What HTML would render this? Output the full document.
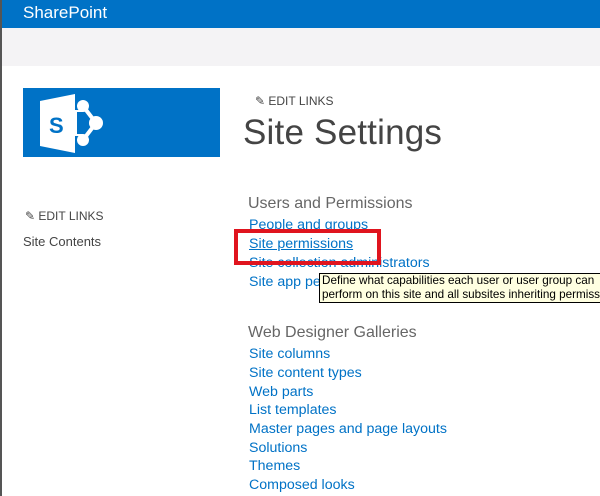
<!DOCTYPE html>
<html><head><style>
body{margin:0;width:600px;height:496px;overflow:hidden;background:#fff;font-family:"Segoe UI","Liberation Sans",sans-serif;position:relative}
.top{position:absolute;left:0;top:0;width:600px;height:28px;background:#0072c6}
.top span{position:absolute;left:23px;top:3px;color:#fff;font-size:17px}
.band{position:absolute;left:0;top:28px;width:600px;height:38px;background:#f4f3f5}
.lb{position:absolute;left:0;top:0;width:2px;height:496px;background:#555}
.logo{position:absolute;left:23px;top:88px;width:197px;height:69px;background:#0072c6}
.t{position:absolute;white-space:nowrap}
.link{position:absolute;left:249px;font-size:14.2px;color:#0072c6;white-space:nowrap}
</style></head><body>
<div class="top"><span>SharePoint</span></div>
<div class="band"></div>
<div class="lb"></div>
<div class="logo">
<svg width="197" height="69" viewBox="0 0 197 69">
<polygon points="17,13 52,6 52,65 17,58" fill="#fff"/>
<text x="26" y="45" font-family="Liberation Sans" font-weight="bold" font-size="22" fill="#0072c6">S</text>
<circle cx="60" cy="18" r="6" fill="#fff"/><circle cx="60" cy="52" r="6" fill="#fff"/><circle cx="73" cy="35" r="7" fill="#fff"/>
<path d="M60,18 L73,35 L60,52" stroke="#fff" stroke-width="4" fill="none"/>
<rect x="52" y="22" width="8" height="26" fill="#fff"/>
<rect x="54" y="24" width="6" height="22" fill="#0072c6"/>
</svg></div>
<div class="t" style="left:255px;top:94px;font-size:12px;color:#444">✎ EDIT LINKS</div>
<div class="t" style="left:243px;top:113px;font-size:35px;color:#444;letter-spacing:0.2px">Site Settings</div>
<div class="t" style="left:25px;top:209px;font-size:12px;color:#444">✎ EDIT LINKS</div>
<div class="t" style="left:23px;top:234px;font-size:13px;color:#444">Site Contents</div>
<div class="t" style="left:248px;top:195px;font-size:16px;color:#666">Users and Permissions</div>
<div class="link" style="top:217px">People and groups</div>
<div class="link" style="top:236px;text-decoration:underline">Site permissions</div>
<div class="link" style="top:255px">Site collection administrators</div>
<div class="link" style="top:274px">Site app permissions</div>
<div style="position:absolute;left:234px;top:229px;width:139px;height:28px;border:4px solid #e0141e"></div>
<div class="t" style="left:319px;top:273px;width:290px;height:28px;background:#ffffe1;border:1px solid #000;font-size:11.7px;line-height:14px;color:#000;padding-left:2px;font-family:'Liberation Sans',sans-serif;overflow:hidden">Define what capabilities each user or user group can<br>perform on this site and all subsites inheriting permissions</div>
<div class="t" style="left:248px;top:324px;font-size:16px;color:#666">Web Designer Galleries</div>
<div class="link" style="top:346px">Site columns</div>
<div class="link" style="top:365px">Site content types</div>
<div class="link" style="top:384px">Web parts</div>
<div class="link" style="top:402px">List templates</div>
<div class="link" style="top:421px">Master pages and page layouts</div>
<div class="link" style="top:440px">Solutions</div>
<div class="link" style="top:458px">Themes</div>
<div class="link" style="top:477px">Composed looks</div>
</body></html>
